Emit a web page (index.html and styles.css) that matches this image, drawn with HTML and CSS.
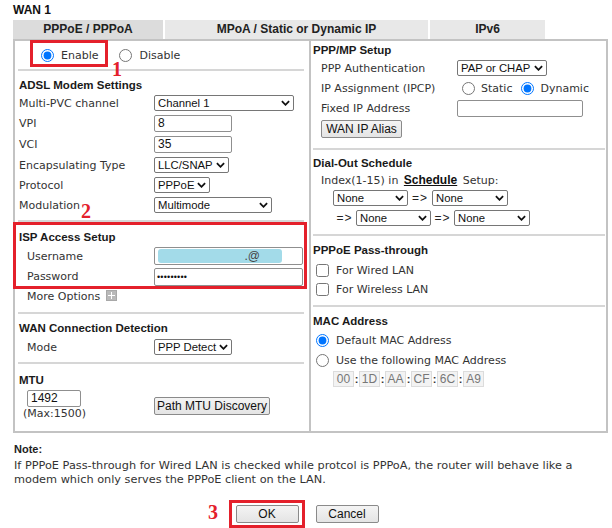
FILE: index.html
```html
<!DOCTYPE html>
<html>
<head>
<meta charset="utf-8">
<link rel="stylesheet" href="styles.css">
</head>
<body>
<div class="page">
  <div class="title">WAN 1</div>
  <div class="tabs">
    <div class="tab tab-active">PPPoE / PPPoA</div>
    <div class="tab tab-mid">MPoA / Static or Dynamic IP</div>
    <div class="tab tab-v6">IPv6</div>
  </div>
  <div class="panel">
    <div class="col col-left">
      <div class="enable-row">
        <label class="opt"><input type="radio" name="en" checked><span>Enable</span></label>
        <label class="opt opt-gap"><input type="radio" name="en"><span>Disable</span></label>
      </div>
      <div class="sep sep-l"></div>
      <div class="h mt6">ADSL Modem Settings</div>
      <div class="row"><span class="lbl">Multi-PVC channel</span><div class="sel w140"><span>Channel 1</span><svg class="chev" viewBox="0 0 10 6"><path d="M1 1l4 4 4-4"/></svg></div></div>
      <div class="row r21"><span class="lbl">VPI</span><div class="inp w78">8</div></div>
      <div class="row r21"><span class="lbl">VCI</span><div class="inp w78">35</div></div>
      <div class="row"><span class="lbl">Encapsulating Type</span><div class="sel w75"><span>LLC/SNAP</span><svg class="chev" viewBox="0 0 10 6"><path d="M1 1l4 4 4-4"/></svg></div></div>
      <div class="row"><span class="lbl">Protocol</span><div class="sel w56"><span>PPPoE</span><svg class="chev" viewBox="0 0 10 6"><path d="M1 1l4 4 4-4"/></svg></div></div>
      <div class="row"><span class="lbl">Modulation</span><div class="sel w118"><span>Multimode</span><svg class="chev" viewBox="0 0 10 6"><path d="M1 1l4 4 4-4"/></svg></div></div>
      <div class="sep sep-l mt5"></div>
      <div class="h mt7">ISP Access Setup</div>
      <div class="row ind mt1"><span class="lbl lbl-ind">Username</span><div class="inp w149"><span class="blur"><span class="blur-at">.@</span></span></div></div>
      <div class="row ind r21"><span class="lbl lbl-ind">Password</span><div class="inp w149 pw">•••••••••</div></div>
      <div class="row ind r19"><span>More Options</span><span class="plus"></span></div>
      <div class="sep sep-l mt6"></div>
      <div class="h mt6">WAN Connection Detection</div>
      <div class="row ind mt1"><span class="lbl lbl-ind">Mode</span><div class="sel w78"><span>PPP Detect</span><svg class="chev" viewBox="0 0 10 6"><path d="M1 1l4 4 4-4"/></svg></div></div>
      <div class="sep sep-l mt5"></div>
      <div class="h mt8">MTU</div>
      <div class="mtu">
        <div class="mtu-left">
          <div class="inp w54">1492</div>
          <div class="max">(Max:1500)</div>
        </div>
        <div class="btn w116 mtu-btn">Path MTU Discovery</div>
      </div>
    </div>
    <div class="col col-right">
      <div class="h mt1">PPP/MP Setup</div>
      <div class="row ind"><span class="lbl lbl-r">PPP Authentication</span><div class="sel w90"><span>PAP or CHAP</span><svg class="chev" viewBox="0 0 10 6"><path d="M1 1l4 4 4-4"/></svg></div></div>
      <div class="row ind"><span class="lbl lbl-r">IP Assignment (IPCP)</span>
        <label class="opt opt-ip"><input type="radio" name="ip"><span>Static</span></label>
        <label class="opt opt-dyn"><input type="radio" name="ip" checked><span>Dynamic</span></label>
      </div>
      <div class="row ind"><span class="lbl lbl-r">Fixed IP Address</span><div class="inp w126"></div></div>
      <div class="row ind mt1"><div class="btn w81">WAN IP Alias</div></div>
      <div class="sep sep-r mt9"></div>
      <div class="h mt5">Dial-Out Schedule</div>
      <div class="idx ind">Index(1-15) in <span class="sched">Schedule</span> Setup:</div>
      <div class="sched-row mt1">
        <div class="sel w75"><span>None</span><svg class="chev" viewBox="0 0 10 6"><path d="M1 1l4 4 4-4"/></svg></div>
        <span class="arrow a24">=&gt;</span>
        <div class="sel w76"><span>None</span><svg class="chev" viewBox="0 0 10 6"><path d="M1 1l4 4 4-4"/></svg></div>
      </div>
      <div class="sched-row mt4">
        <span class="arrow a23">=&gt;</span>
        <div class="sel w75"><span>None</span><svg class="chev" viewBox="0 0 10 6"><path d="M1 1l4 4 4-4"/></svg></div>
        <span class="arrow a23">=&gt;</span>
        <div class="sel w76"><span>None</span><svg class="chev" viewBox="0 0 10 6"><path d="M1 1l4 4 4-4"/></svg></div>
      </div>
      <div class="sep sep-r mt8"></div>
      <div class="h mt6">PPPoE Pass-through</div>
      <div class="row chk-row mt2"><label class="opt"><input type="checkbox"><span>For Wired LAN</span></label></div>
      <div class="row chk-row r19"><label class="opt"><input type="checkbox"><span>For Wireless LAN</span></label></div>
      <div class="sep sep-r mt6"></div>
      <div class="h mt6">MAC Address</div>
      <div class="row chk-row mt1"><label class="opt"><input type="radio" name="mac" checked><span>Default MAC Address</span></label></div>
      <div class="row chk-row"><label class="opt"><input type="radio" name="mac"><span>Use the following MAC Address</span></label></div>
      <div class="mac mt1">
        <span class="mb">00</span><span class="colon">:</span><span class="mb">1D</span><span class="colon">:</span><span class="mb">AA</span><span class="colon">:</span><span class="mb">CF</span><span class="colon">:</span><span class="mb">6C</span><span class="colon">:</span><span class="mb">A9</span>
      </div>
    </div>
  </div>
  <div class="note-h">Note:</div>
  <div class="note">If PPPoE Pass-through for Wired LAN is checked while protcol is PPPoA, the router will behave like a modem which only serves the PPPoE client on the LAN.</div>
  <div class="actions">
    <div class="btn w63">OK</div>
    <div class="btn w63">Cancel</div>
  </div>

  <div class="ann ann1"></div>
  <div class="ann ann2"></div>
  <div class="ann ann3"></div>
  <div class="num num1">1</div>
  <div class="num num2">2</div>
  <div class="num num3">3</div>
</div>
</body>
</html>
```
FILE: styles.css
```css
* { box-sizing: border-box; }
html, body { margin: 0; padding: 0; background: #fff; }
body {
  font-family: "DejaVu Sans", Verdana, sans-serif;
  font-size: 11px;
  color: #333;
}
.page { position: relative; width: 612px; height: 528px; overflow: hidden; }

.title {
  height: 20px;
  padding-left: 13px;
  font: bold 12px/20px "Liberation Sans", Arial, sans-serif;
  color: #111;
}
.tabs { display: flex; gap: 2px; margin-left: 13px; height: 19px; }
.tab {
  font: bold 12px/19px "Liberation Sans", Arial, sans-serif;
  color: #222;
  text-align: center;
  background: #e8e8e8;
}
.tab-active { width: 150px; background: #dcdcdc; }
.tab-mid { width: 263px; }
.tab-v6 { width: 115px; }

.panel {
  display: flex;
  margin-left: 13px;
  width: 595px;
  height: 394px;
  border: 2px solid #c3c3c3;
}
.col-left { width: 296px; padding-left: 4px; border-right: 2px solid #c3c3c3; }
.col-right { flex: 1; padding-left: 2px; }

.h {
  height: 16px;
  font: bold 11.5px/16px "Liberation Sans", Arial, sans-serif;
  color: #1a1a1a;
}
.mt1 { margin-top: 1px; }
.mt2 { margin-top: 2px; }
.mt4 { margin-top: 4px; }
.mt5 { margin-top: 5px; }
.mt6 { margin-top: 6px; }
.mt7 { margin-top: 7px; }
.mt8 { margin-top: 8px; }
.mt9 { margin-top: 9px; }

.sep { height: 2px; background: #d6d6d6; }
.sep-l { margin-left: -1px; width: 286px; }
.sep-r { width: 292px; }

.enable-row { height: 28px; display: flex; align-items: center; padding-left: 22px; padding-top: 1px; }
.opt { display: inline-flex; align-items: center; gap: 7px; white-space: nowrap; }
.opt input { margin: 0; width: 13px; height: 13px; flex: none; }
.opt-gap { margin-left: 21px; }
.opt-ip { margin-left: 5px; gap: 6px; }
.opt-dyn { margin-left: 9px; gap: 6px; }

.row { display: flex; align-items: center; height: 20px; white-space: nowrap; }
.r21 { height: 21px; }
.r19 { height: 19px; }
.ind { padding-left: 8px; }
.lbl { width: 135px; flex: none; }
.lbl-ind { width: 127px; }
.lbl-r { width: 136px; }
.chk-row { padding-left: 3px; }

.sel {
  display: flex;
  align-items: center;
  justify-content: space-between;
  height: 16px;
  border: 1px solid #767676;
  border-radius: 2px;
  padding: 0 3px 0 3px;
  background: #fff;
  font: 11.3px/14px "Liberation Sans", Arial, sans-serif;
  color: #111;
  flex: none;
  white-space: nowrap;
  overflow: hidden;
}
.chev { width: 9px; height: 6px; fill: none; stroke: #111; stroke-width: 2; flex: none; margin-left: 2px; }

.inp {
  height: 17px;
  border: 1px solid #8f8f8f;
  border-radius: 2px;
  padding: 0 3px;
  background: #fff;
  font: 12px/15px "Liberation Sans", Arial, sans-serif;
  color: #111;
  flex: none;
  overflow: hidden;
  white-space: nowrap;
}
.inp.w149 { height: 18px; }
.w54 { width: 54px; }
.w56 { width: 56px; }
.w63 { width: 63px; }
.w75 { width: 75px; }
.w76 { width: 76px; }
.w78 { width: 78px; }
.w81 { width: 81px; }
.w90 { width: 90px; }
.w116 { width: 116px; }
.w118 { width: 118px; }
.w126 { width: 126px; }
.w140 { width: 140px; }
.w149 { width: 149px; }

.blur {
  display: inline-block;
  margin-top: 1px;
  width: 124px;
  height: 14px;
  background: #a3dbe9;
  border-radius: 3px;
  text-align: right;
  font: 12px/14px "Liberation Sans", Arial, sans-serif;
  color: #444;
}
.blur-at { margin-right: 22px; }
.pw { font: 9px/16px "Liberation Sans", Arial, sans-serif; letter-spacing: 0.2px; padding-left: 2px; }

.plus {
  position: relative;
  display: inline-block;
  width: 11px;
  height: 11px;
  margin-left: 6px;
  margin-top: -3px;
  background: #b9b9b9;
  border: 1px solid #a8a8a8;
}
.plus::before, .plus::after { content: ""; position: absolute; background: #fff; }
.plus::before { left: 4px; top: 1px; width: 1px; height: 7px; }
.plus::after { left: 1px; top: 4px; width: 7px; height: 1px; }

.btn {
  height: 18px;
  border: 1px solid #8a8a8a;
  border-radius: 2px;
  background: linear-gradient(#f4f4f4, #e4e4e4);
  font: 12px/16px "Liberation Sans", Arial, sans-serif;
  color: #111;
  text-align: center;
  flex: none;
}

.mtu { display: flex; margin-top: 2px; }
.mtu-left { width: 135px; flex: none; }
.mtu-left .inp { margin-left: 8px; }
.max { margin-left: 4px; height: 13px; line-height: 13px; }
.mtu-btn { margin-top: 7px; }

.idx { height: 16px; line-height: 16px; margin-top: 2px; white-space: nowrap; }
.sched { font: bold 12px "Liberation Sans", Arial, sans-serif; text-decoration: underline; color: #111; margin: 0 2px; }
.sched-row { display: flex; align-items: center; height: 16px; padding-left: 20px; }
.arrow { text-align: center; font: 12px "Liberation Sans", Arial, sans-serif; color: #222; letter-spacing: 1px; }
.a24 { width: 24px; }
.a23 { width: 23px; }

.mac { display: flex; align-items: center; height: 16px; padding-left: 20px; }
.mb {
  width: 21px;
  height: 16px;
  background: #f3f3f3;
  border: 1px solid #dcdcdc;
  font: 12px/14px "Liberation Sans", Arial, sans-serif;
  color: #777;
  text-align: center;
}
.colon { width: 5px; text-align: center; font: bold 11px "Liberation Sans", Arial, sans-serif; color: #333; }

.note-h {
  margin-top: 10px;
  padding-left: 14px;
  height: 12px;
  font: bold 11px/12px "Liberation Sans", Arial, sans-serif;
  color: #222;
}
.note {
  margin-top: 4px;
  padding-left: 14px;
  width: 595px;
  font-size: 11.3px;
  line-height: 14px;
  color: #333;
}
.actions { display: flex; justify-content: center; gap: 17px; margin-top: 18px; padding-left: 2px; }

.ann { position: absolute; border: 3px solid #e4202b; }
.ann1 { left: 30px; top: 40px; width: 78px; height: 27px; }
.ann2 { left: 13px; top: 222px; width: 294px; height: 67px; }
.ann3 { left: 229px; top: 500px; width: 76px; height: 28px; }
.num {
  position: absolute;
  font: bold 20px/20px "Liberation Serif", "Times New Roman", serif;
  color: #e4202b;
}
.num1 { left: 112px; top: 59px; }
.num2 { left: 81px; top: 201px; }
.num3 { left: 208px; top: 502px; }
```
